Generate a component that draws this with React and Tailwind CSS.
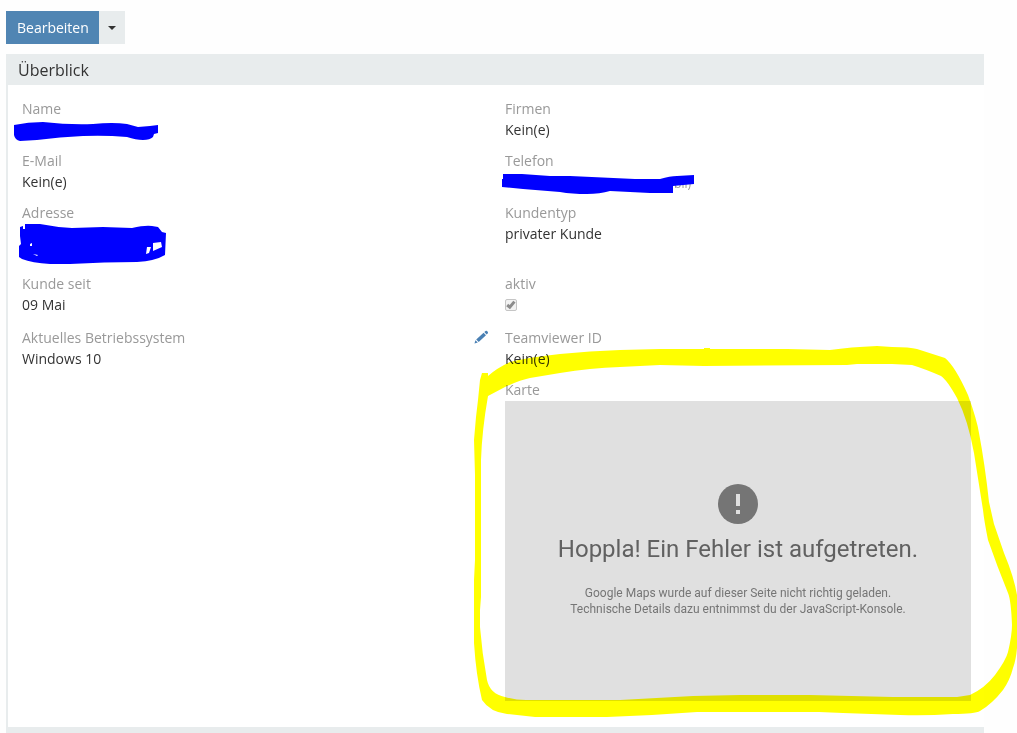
import React from 'react'

const Label = ({ children }) => (
  <dt className="text-[#999999]">{children}</dt>
)

const PencilIcon = () => (
  <svg className="w-[15px] h-[15px]" viewBox="0 0 15 15" aria-hidden="true">
    <path fill="currentColor" d="M0.5 13.5L1.4 10.2L3.8 12.6ZM2.2 9.4L9.6 2.8L12 5.2L4.7 11.9ZM10.3 2.1L11.5 1Q12.3 0.4 13.1 1.1L13.8 1.9Q14.4 2.7 13.7 3.4L12.6 4.5Z" />
  </svg>
)

const NameMark = () => (
  <svg className="absolute -left-2 top-[3px] w-[144px] h-[20px]" viewBox="14 122 144 20" aria-hidden="true">
    <path fill="#0000ff" d="M14 125Q28 122 43 122Q70 125 93 124Q113 122 127 124L138 127L150 126L158 125V133L154 134L153 137Q150 140 143 140Q136 140 127 137Q105 135 83 136Q60 137 37 140L20 141Q15 140 14 135Z" />
  </svg>
)

const PhoneMark = () => (
  <svg className="absolute -left-[3px] top-[3px] w-[192px] h-[20px]" viewBox="502 174 192 20" aria-hidden="true">
    <path fill="#0000ff" d="M503 174H522L550 176H570L635 179H660Q670 176 677 176L694 175V184L673 186V193H650L610 191Q600 194 587 194Q572 194 560 192L523 189L502 187V179H503Z" />
  </svg>
)

const AddressMark = () => (
  <svg className="absolute -left-[3px] top-px w-[147px] h-[41px]" viewBox="19 224 147 41" aria-hidden="true">
    <path
      fill="#0000ff"
      fillRule="evenodd"
      d="M20 227L23 226V229H25V224H40Q55 227 72 228L103 227L132 228Q145 225 152 226L158 227L162 232L166 233L165 255Q155 261 137 262Q105 262 70 264H50Q32 263 22 259L19 257V246L21 244L20 236ZM30 244L32 243V246H30ZM153 243L161 242L162 247L153 251ZM147 247L151 247L149 253L146 254ZM33 254L38 255L37 256Z"
    />
  </svg>
)

// hand drawn marker ring around the map
const Ring = () => (
  <svg
    className="absolute -left-[35px] -top-[56px] w-[calc(100%+81px)] h-[375px] mix-blend-multiply pointer-events-none"
    viewBox="470 345 547 375"
    preserveAspectRatio="none"
    aria-hidden="true"
  >
    <path
      fill="#ffff00"
      fillRule="evenodd"
      d="M482 373H488V376Q497 368 510 362Q530 357 560 354Q590 351 620 350L660 349H704V348H710V349H787L830 350Q850 347 877 346L892 347Q910 347 917 349L945 358Q955 366 968 395Q977 420 979 433Q985 465 989 502L994 524L1004 553Q1014 577 1017 595V648Q1016 660 1013 668Q1010 680 1003 690Q992 704 980 711Q975 714 953 714Q925 716 900 715L843 713L819 712H697L652 715L607 717H535L507 714Q490 712 482 700Q476 675 474 643V580L475 560V475L474 440L476 417L478 400L480 380Z
        M530 378Q520 380 505 387L488 396Q482 430 481 460V597L480 610V627Q482 653 487 680Q490 694 505 697Q515 700 526 700H620L693 696L740 695H810L893 697H957L970 695Q985 688 995 675Q1006 660 1008 652Q1012 635 1012 625Q1011 600 1008 593Q997 566 988 540Q984 520 983 510L974 453Q968 420 957 398Q947 380 941 376Q925 369 912 365L892 364H857L847 365L704 366L660 365L620 367Q590 368 560 373Z"
    />
  </svg>
)

const App = () => {
  return (
    <div className="min-h-screen bg-[#fefefe] pl-1.5 pr-[33px] pt-[11px] font-['Open_Sans',sans-serif] text-[14px] leading-[21px] text-[#333333]">
      <div className="flex h-[33px] mb-2.5">
        <button type="button" className="pl-[11px] pr-2.5 bg-[#5085b3] text-white">Bearbeiten</button>
        <button type="button" aria-label="Weitere Aktionen" className="flex items-center justify-center w-[26px] bg-[#e8eced]">
          <svg className="w-2 h-1" viewBox="0 0 8 4" aria-hidden="true">
            <path fill="#333333" d="M0 0H8L4 4Z" />
          </svg>
        </button>
      </div>

      <section className="border-l-2 border-b-[6px] border-[#e8eced] bg-white">
        <h4 className="px-2.5 pt-1.5 pb-1 bg-[#e8eced] text-[16px] leading-[21px]">Überblick</h4>

        <dl className="grid grid-cols-2 px-[5px] pt-[13px] pb-[26px]">
          <div className="h-[52px] pl-[9px] pr-2">
            <Label>Name</Label>
            <dd className="relative h-[21px]"><NameMark /></dd>
          </div>
          <div className="h-[52px] pl-[9px] pr-2">
            <Label>Firmen</Label>
            <dd>Kein(e)</dd>
          </div>

          <div className="h-[52px] pl-[9px] pr-2">
            <Label>E-Mail</Label>
            <dd>Kein(e)</dd>
          </div>
          <div className="h-[52px] pl-[9px] pr-2">
            <Label>Telefon</Label>
            <dd className="relative w-[186px] pt-0.5 text-right text-[12px] text-[#999999]">
              (Mobil)
              <PhoneMark />
            </dd>
          </div>

          <div className="h-[71px] pl-[9px] pr-2">
            <Label>Adresse</Label>
            <dd className="relative h-[42px]"><AddressMark /></dd>
          </div>
          <div className="h-[71px] pl-[9px] pr-2">
            <Label>Kundentyp</Label>
            <dd>privater Kunde</dd>
          </div>

          <div className="h-[54px] pl-[9px] pr-2">
            <Label>Kunde seit</Label>
            <dd>09 Mai</dd>
          </div>
          <div className="h-[54px] pl-[9px] pr-2">
            <Label><label htmlFor="aktiv">aktiv</label></Label>
            <dd className="flex items-center h-[21px]">
              <span className="relative flex">
                <input id="aktiv" type="checkbox" checked disabled readOnly className="appearance-none w-3 h-3 border border-[#c5c5c5] rounded-[2px] bg-[#f2f2f2]" />
                <svg className="absolute inset-0 w-3 h-3" viewBox="0 0 12 12" fill="none" aria-hidden="true">
                  <path stroke="#8c8c8c" strokeWidth="3" d="M2.2 6L4.8 8.2L9.4 2.6" />
                </svg>
              </span>
            </dd>
          </div>

          <div className="flex justify-between h-[52px] pl-[9px] pr-[7px]">
            <div>
              <Label>Aktuelles Betriebssystem</Label>
              <dd>Windows 10</dd>
            </div>
            <button type="button" aria-label="Bearbeiten" className="flex items-center h-5 text-[#4a80b4]">
              <PencilIcon />
            </button>
          </div>
          <div className="h-[52px] pl-[9px] pr-2">
            <Label>Teamviewer ID</Label>
            <dd>Kein(e)</dd>
          </div>

          <div className="col-start-2 pl-[9px] pr-2">
            <Label>Karte</Label>
            <dd className="relative mt-px">
              <div className="flex flex-col items-center h-[300px] pt-[83px] bg-[#e0e0e0] text-center font-[Roboto,sans-serif]">
                <svg className="w-10 h-10" viewBox="0 0 40 40" aria-hidden="true">
                  <circle cx="20" cy="20" r="20" fill="#757575" />
                  <path fill="#e0e0e0" d="M18 10H22V22H18ZM18 26H22V30H18Z" />
                </svg>
                <p className="mt-[9px] text-[24px] leading-[32px] text-[#616161]">Hoppla! Ein Fehler ist aufgetreten.</p>
                <p className="mt-5 text-[12px] leading-[16px] text-[#757575]">
                  Google Maps wurde auf dieser Seite nicht richtig geladen.
                  <br />
                  Technische Details dazu entnimmst du der JavaScript-Konsole.
                </p>
              </div>
              <Ring />
            </dd>
          </div>
        </dl>
      </section>
    </div>
  )
}

export default App
